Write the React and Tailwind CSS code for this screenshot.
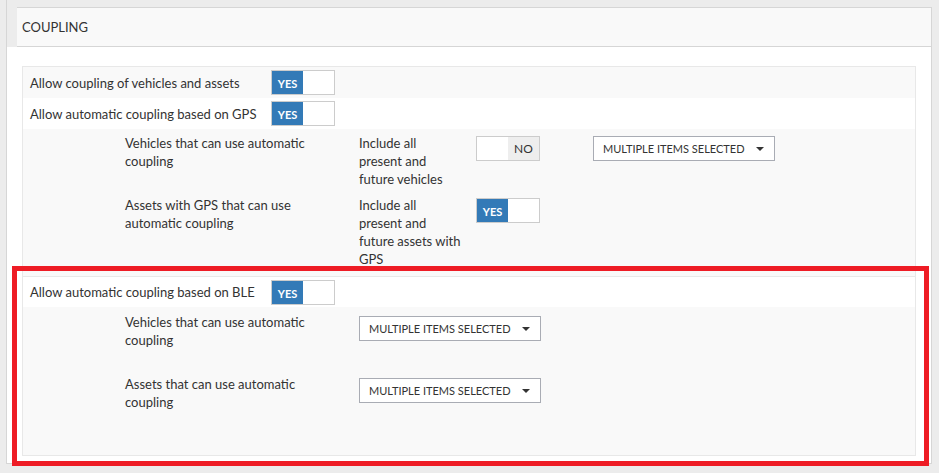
import React from "react";

function Toggle({ on }) {
  return (
    <div className="flex h-[25px] w-[64px] border border-[#cccccc] bg-white text-[11px] leading-none">
      {on ? (
        <>
          <div className="flex w-[31px] items-center justify-center bg-[#337ab7] pt-[2px] font-bold text-white">YES</div>
          <div className="flex-1 bg-white" />
        </>
      ) : (
        <>
          <div className="w-[31px] bg-white" />
          <div className="flex flex-1 items-center justify-center bg-[#eeeeee] pt-[1px] text-[12px] text-[#333]">NO</div>
        </>
      )}
    </div>
  );
}

function MultiSelect() {
  return (
    <div className="flex h-[25px] w-[182px] items-center justify-between border border-[#a9acb4] bg-white pl-[9px] pr-[10px] text-[11px] text-[#333]">
      <span>MULTIPLE ITEMS SELECTED</span>
      <svg width="8" height="4" viewBox="0 0 8 4">
        <path d="M0 0h8L4 4z" fill="#333" />
      </svg>
    </div>
  );
}

function MainRow({ label, white, border }) {
  return (
    <div className={`flex h-[31px] items-center ${white ? "bg-white" : "bg-[#f9f9f9]"} ${border ? "border-t border-[#e8e8e8]" : ""}`}>
      <div className="w-[248px] pl-[7px]">{label}</div>
      <Toggle on />
    </div>
  );
}

export default function App() {
  return (
    <div className="relative h-[473px] overflow-hidden bg-[#ececec] font-['Lato',sans-serif] text-[13px] leading-[18px] text-[#333]">
      <div className="ml-[6px] w-[926px] border-b border-l border-[#d6d6d6] pt-[7px]">
        {/* Header */}
        <div className="ml-[10px] flex h-[40px] items-center border-y border-r border-[#d6d6d6] bg-[#f9f9f9] pl-[5px]">
          <span className="uppercase">Coupling</span>
        </div>

        {/* Body */}
        <div className="border-r border-[#d6d6d6] bg-white pb-[7px] pl-[15px] pr-[15px] pt-[19px]">
          <div className="border border-[#e8e8e8]">
            <MainRow label="Allow coupling of vehicles and assets" />
            <MainRow label="Allow automatic coupling based on GPS" white />

            {/* GPS settings */}
            <div className="flex flex-col gap-[8px] bg-[#f9f9f9] pb-[8px] pt-[5px]">
              <div className="flex items-start">
                <div className="w-[336px] pl-[102px] pr-[30px]">Vehicles that can use automatic coupling</div>
                <div className="w-[117px]">
                  Include all
                  <br />
                  present and
                  <br />
                  future vehicles
                </div>
                <div className="mt-[2px] w-[117px]">
                  <Toggle on={false} />
                </div>
                <div className="mt-[2px]">
                  <MultiSelect />
                </div>
              </div>
              <div className="flex items-start">
                <div className="w-[336px] pl-[102px] pr-[30px]">Assets with GPS that can use automatic coupling</div>
                <div className="w-[117px]">
                  Include all
                  <br />
                  present and
                  <br />
                  future assets with
                  <br />
                  GPS
                </div>
                <div className="mt-[2px] w-[117px]">
                  <Toggle on />
                </div>
              </div>
            </div>

            <MainRow label="Allow automatic coupling based on BLE" white border />

            {/* BLE settings */}
            <div className="bg-[#f9f9f9] pb-[18px] pt-[6px]">
              <div className="flex h-[62px] items-start">
                <div className="w-[336px] pl-[102px] pr-[30px]">Vehicles that can use automatic coupling</div>
                <div className="mt-[3px]">
                  <MultiSelect />
                </div>
              </div>
              <div className="flex h-[62px] items-start">
                <div className="w-[336px] pl-[102px] pr-[30px]">Assets that can use automatic coupling</div>
                <div className="mt-[3px]">
                  <MultiSelect />
                </div>
              </div>
            </div>
          </div>
        </div>
      </div>

      {/* red annotation frame */}
      <div className="pointer-events-none absolute left-[12px] top-[266px] h-[200px] w-[917px] border-[5px] border-[#ee1c25]" />
    </div>
  );
}
